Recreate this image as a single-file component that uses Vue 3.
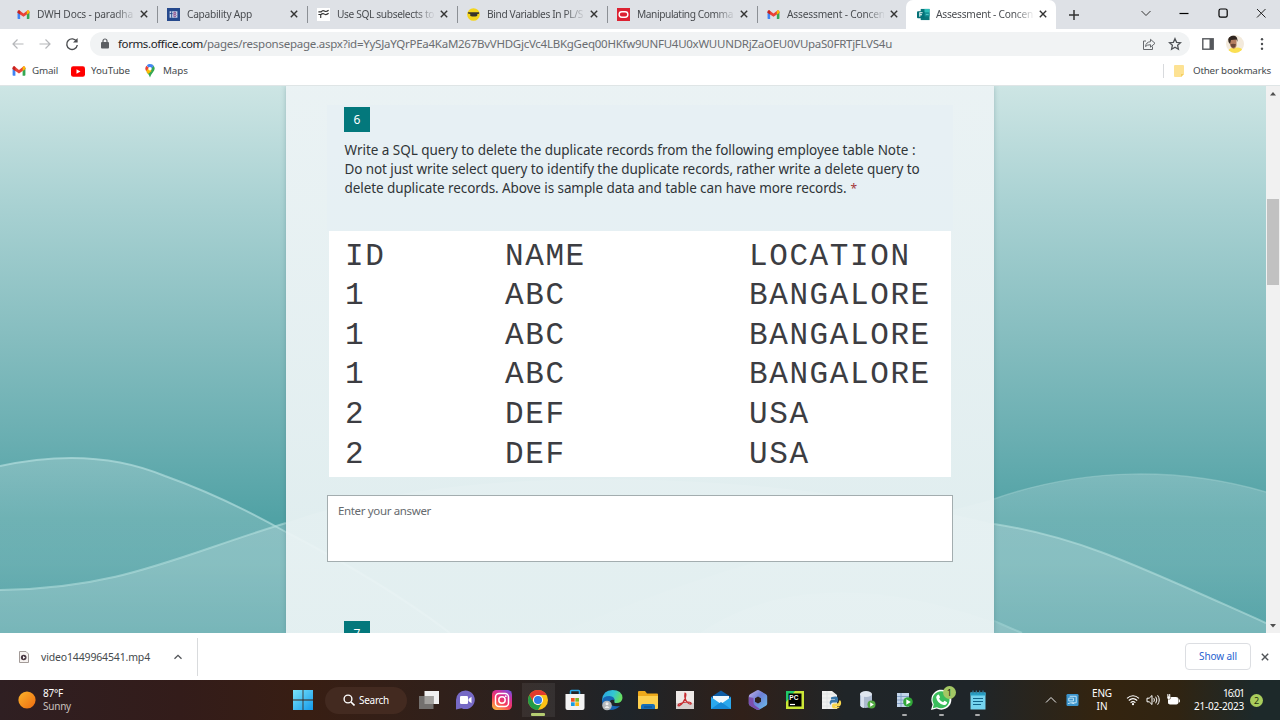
<script setup>
const tabs = [
  { icon: 'gmail', title: 'DWH Docs - paradha', w: 96 },
  { icon: 'cap', title: 'Capability App', w: 65 },
  { icon: 'sql', title: 'Use SQL subselects to', w: 97 },
  { icon: 'bind', title: 'Bind Variables In PL/S', w: 96 },
  { icon: 'oracle', title: 'Manipulating Comma', w: 96 },
  { icon: 'gmail', title: 'Assessment - Concen', w: 98 },
  { icon: 'forms', title: 'Assessment - Concen', w: 97, active: true },
]
const rows = [
  ['ID', 'NAME', 'LOCATION'],
  ['1', 'ABC', 'BANGALORE'],
  ['1', 'ABC', 'BANGALORE'],
  ['1', 'ABC', 'BANGALORE'],
  ['2', 'DEF', 'USA'],
  ['2', 'DEF', 'USA'],
]
const question = [
  { t: 'Write a SQL query to delete the duplicate records from the following employee table Note :', w: 571 },
  { t: 'Do not just write select query to identify the duplicate records, rather write a delete query to', w: 575 },
  { t: 'delete duplicate records. Above is sample data and table can have more records.', w: 502, req: true },
]

// Spreads the tracking of a label so that it takes the given width.
const vFit = {
  mounted(el, { value }) {
    const n = [...el.textContent].length
    const natural = el.getBoundingClientRect().width
    el.style.letterSpacing = (value - natural) / n + 'px'
  },
}
</script>

<template>
  <div class="screen">
    <svg width="0" height="0" class="defs">
      <defs>
        <symbol id="gmail" viewBox="0 0 14 14">
          <path d="M.6 4v7.100q0 .7.700.7h2.100V6z" fill="#4285f4" />
          <path d="M13.400 4v7.100q0 .7-.7.7h-2.100V6z" fill="#34a853" />
          <path d="M.6 4.200q0-2 1.800-1.900L7 5.900l4.600-3.600q1.800-.1 1.800 1.900v.8L7 9.500.6 5z" fill="#ea4335" />
          <path d="M10.600 3.100l1-.8q1.800-.1 1.800 1.900v.8l-2.800 2z" fill="#fbbc04" />
          <path d="M3.400 3.100l-1-.8Q.6 2.200.6 4.200V5l2.800 2z" fill="#c5221f" />
        </symbol>
        <symbol id="cap" viewBox="0 0 14 14">
          <path d="M0 0h14v14H0z" fill="#26498d" /><path d="M2.800 3.500h8.400v7H2.800z" fill="#c9d5ea" />
          <path d="M5 3.500v7M2.800 6H6" stroke="#26498d" /><path d="M7.500 4.500H9q1 1.200 0 2.300 1.500 1.200 0 2.700H7.500zM7.500 6.800H9" fill="none" stroke="#8c4a86" />
        </symbol>
        <symbol id="sql" viewBox="0 0 14 14">
          <path d="M0 0h14v14H0z" fill="#fff" />
          <path d="M1.500 4.200h3q1.500-2.200 3.500-.9t4.500-.9M1.500 7h2.500v3.800M4 7.300q2-2 4-.7t4.500-.9" fill="none" stroke="#333" stroke-width="1.200" />
        </symbol>
        <symbol id="bind" viewBox="0 0 14 14">
          <circle cx="7" cy="7" r="6.800" fill="#f4d51d" />
          <path d="M1 4.500l4 .2h4l4-.2v1.700l-2 .4v2l-2 .6H5.500L3.500 8.500v-2L1 6z" fill="#37342b" />
        </symbol>
        <symbol id="oracle" viewBox="0 0 14 14">
          <path d="M0 0h14v14H0z" fill="#dc2232" /><rect x="2.300" y="4.100" width="9.400" height="5.800" rx="2.900" fill="none" stroke="#fff" stroke-width="1.500" />
        </symbol>
        <symbol id="forms" viewBox="0 0 14 14">
          <path d="M4 1h9.500v12H4z" fill="#0b777b" /><path d="M8 1h5.500v4H8z" fill="#2ebeb9" /><path d="M8 5h5.500v4H8z" fill="#159297" />
          <path d="M9.500 7h3" stroke="#5cc9c8" /><rect y="3.500" width="8" height="7.500" rx="1" fill="#047177" />
          <path d="M3 9.500V5h3M3 7.200h2.400" stroke="#fff" fill="none" stroke-width="1.100" />
        </symbol>
        <symbol id="close" viewBox="0 0 10 10"><path d="M1.800 1.800l6.400 6.400m0-6.400l-6.400 6.400" stroke="currentColor" stroke-width="1.400" /></symbol>
        <linearGradient id="crest" x1="0" y1="374" x2="0" y2="548" gradientUnits="userSpaceOnUse">
          <stop stop-color="#fff" stop-opacity=".2" /><stop offset=".6" stop-color="#fff" stop-opacity=".15" /><stop offset="1" stop-color="#fff" stop-opacity=".05" />
        </linearGradient>
      </defs>
    </svg>

    <header class="tabstrip">
      <div v-for="(t, i) in tabs" :key="i" class="tab" :class="{ active: t.active, nosep: i === 5 }">
        <svg class="fav"><use :href="'#' + t.icon" /></svg>
        <span class="ttl"><span v-fit="t.w">{{ t.title }}</span></span>
        <svg class="x"><use href="#close" /></svg>
      </div>
      <svg class="plus" viewBox="0 0 12 12"><path d="M6 1v10M1 6h10" stroke="#333" stroke-width="1.500" /></svg>
      <div class="winbtns">
        <svg viewBox="0 0 12 12"><path d="M1.500 4L6 8.500 10.500 4" fill="none" stroke="#333" /></svg>
        <svg viewBox="0 0 12 12"><path d="M1.500 6.500h9" stroke="#000" stroke-width="1.200" /></svg>
        <svg viewBox="0 0 12 12"><rect x="2" y="2" width="8.200" height="8.200" rx="1.700" fill="none" stroke="#000" stroke-width="1.200" /></svg>
        <svg viewBox="0 0 12 12"><path d="M2 2l8.500 8.500m0-8.500L2 10.500" stroke="#222" /></svg>
      </div>
    </header>

    <div class="toolbar">
      <svg class="nav" viewBox="0 0 14 14"><path d="M12.500 7H2m4.500-4.500L2 7l4.500 4.500" fill="none" stroke="#b5b7ba" stroke-width="1.200" /></svg>
      <svg class="nav" viewBox="0 0 14 14"><path d="M1.500 7H12M7.500 2.500L12 7l-4.500 4.500" fill="none" stroke="#b5b7ba" stroke-width="1.200" /></svg>
      <svg class="nav" viewBox="0 0 14 14"><path d="M11.700 4.600A5.300 5.300 0 1 0 12.300 8" fill="none" stroke="#4b4d50" stroke-width="1.400" /><path d="M12.600 1v4.600H8z" fill="#4b4d50" /></svg>
      <div class="omni">
        <svg class="lock" viewBox="0 0 8 11"><rect y="4" width="8" height="6.500" rx="1" fill="#5b5e62" /><path d="M2 4.500V3a2 2 0 0 1 4 0v1.500" fill="none" stroke="#5b5e62" stroke-width="1.200" /></svg>
        <span class="url"><span v-fit="85" class="host">forms.office.com</span><span v-fit="689">/pages/responsepage.aspx?id=YySJaYQrPEa4KaM267BvVHDGjcVc4LBKgGeq00HKfw9UNFU4U0xWUUNDRjZaOEU0VUpaS0FRTjFLVS4u</span></span>
        <svg class="share" viewBox="0 0 14 14"><path d="M4 4H1.500v8.500h9V9.500M3.500 9.500q.5-4.500 5-4.800V2.300l4.500 4-4.500 3.900V7.700Q5 7.700 3.500 9.500z" fill="none" stroke="#66696d" /></svg>
        <svg class="star" viewBox="0 0 14 14"><path d="M7 1.700l1.600 3.600 3.900.4-2.900 2.600.8 3.900L7 10.200l-3.400 2 .8-3.900L1.500 5.700l3.900-.4z" fill="none" stroke="#505357" stroke-width="1.300" /></svg>
      </div>
      <svg class="side" viewBox="0 0 12 12"><rect x=".8" y=".8" width="10.400" height="10.400" fill="none" stroke="#55585c" stroke-width="1.400" /><path d="M7.500 1H11v10H7.500z" fill="#55585c" /></svg>
      <svg class="avatar" viewBox="0 0 18 18">
        <clipPath id="av"><circle cx="9" cy="9" r="9" /></clipPath>
        <g clip-path="url(#av)"><path d="M0 0h18v18H0z" fill="#f3eadc" /><path d="M2 18q0-4.500 4-5l6-.5q5 .5 6 6z" fill="#fbe052" /><path d="M4 4h6.500v7q-1.500 3.500-3.500 2.500Q4 12 4 9z" fill="#b57e61" /><path d="M2.500 7Q1 1 6.500.5T11.500 7L10.500 4.500 5 5 4 9z" fill="#30251f" /><path d="M4.500 9.300q2.500-1 5.500 0l-1 2.700q-2 1.300-3.500 0z" fill="#6a4638" /></g>
      </svg>
      <svg class="dots" viewBox="0 0 4 14"><g fill="#4b4d50"><circle cx="2" cy="2.200" r="1.200" /><circle cx="2" cy="7" r="1.200" /><circle cx="2" cy="11.800" r="1.200" /></g></svg>
    </div>

    <div class="bookmarks">
      <svg class="bm g"><use href="#gmail" /></svg><span v-fit="26" class="bt">Gmail</span>
      <svg class="bm yt" viewBox="0 0 14 11"><rect width="14" height="10.500" y=".3" rx="2.200" fill="#f00" /><path d="M5.500 3.200v4.600l4-2.300z" fill="#fff" /></svg><span v-fit="39" class="bt">YouTube</span>
      <svg class="bm mp" viewBox="0 0 10 14"><path d="M1.400 1.700A4.600 4.600 0 0 0 1.200 7.200L5 4.500z" fill="#ea4335" /><path d="M5 0a4.600 4.600 0 0 1 3.700 1.800L1.500 8Q4.300 11 5 13.500 5.700 11 8 8.300 11 5 8.700 1.800z" fill="#34a853" /><path d="M1.200 7l2.500-3 3 3-3.700 3z" fill="#fbbc04" /><path d="M1.900 1.200Q5-1.500 8.700 1.800L6.400 4.500 3 3z" fill="#4285f4" /><circle cx="5" cy="4.700" r="1.700" fill="#fff" /></svg><span v-fit="25" class="bt">Maps</span>
      <div class="other"><svg viewBox="0 0 10 12"><path d="M0 1q0-1 1-1h8q1 0 1 1v8l-3 3H1q-1 0-1-1z" fill="#fde293" /><path d="M7 12V9h3" fill="#f5cf60" /></svg><span v-fit="78" class="bt">Other bookmarks</span></div>
    </div>

    <main class="page">
      <svg class="waves" viewBox="0 0 1266 548" preserveAspectRatio="none">
        <path d="M0 381C60 368 115 370 165 391C210 407 245 424 286 447C350 480 400 510 450 548H0z" fill="url(#crest)" />
        <path d="M560 548C740 470 900 440 994 414C1085 382 1180 382 1266 407V548z" fill="url(#crest)" />
        <path d="M0 505C120 504 180 470 286 438C470 370 800 390 994 439C1080 452 1140 482 1266 538V548H0z" fill="#fff" fill-opacity=".2" />
        <path d="M700 548C800 480 930 510 1022 548z" fill="#fff" fill-opacity=".15" />
        <g fill="none" stroke-width="2">
          <path d="M0 381C60 368 115 370 165 391C210 407 245 424 286 447C350 480 400 510 450 548" stroke="#b4dfde" stroke-opacity=".65" />
          <path d="M0 505C120 504 180 470 286 438M994 439C1080 452 1140 482 1266 538" stroke="#b4dfde" stroke-opacity=".6" />
          <path d="M994 414C1085 382 1180 382 1266 407" stroke="#9dcfcf" stroke-opacity=".5" stroke-width="1.500" />
          <path d="M994 536L1022 548" stroke="#a5d5d5" stroke-opacity=".6" />
        </g>
      </svg>
      <section class="sheet">
        <div class="qblock">
          <div class="num">6</div>
          <div class="qtext">
            <div v-for="l in question" :key="l.t" class="ql"><span v-fit="l.w">{{ l.t }}</span><span v-if="l.req" class="req">*</span></div>
          </div>
        </div>
        <div class="data">
          <div v-for="(r, i) in rows" :key="i" class="dr"><span v-for="c in r" :key="c">{{ c }}</span></div>
        </div>
        <div class="answer"><span v-fit="93">Enter your answer</span></div>
        <div class="num next">7</div>
      </section>
      <aside class="scroll">
        <svg viewBox="0 0 14 14"><path d="M4 9h6L7 5.500z" fill="#505050" /></svg>
        <div class="thumb"></div>
        <svg viewBox="0 0 14 14"><path d="M4 5.500h6L7 9z" fill="#505050" /></svg>
      </aside>
    </main>

    <div class="downloads">
      <div class="dl">
        <svg class="file" viewBox="0 0 10 12"><path d="M.5.500h6.500l2.500 2.500v8.500h-9z" fill="#f7f3f1" stroke="#a39b98" /><circle cx="4.700" cy="6.500" r="2.800" fill="#4b3943" /><path d="M4 5v3l2.300-1.500z" fill="#fff" /></svg>
        <span v-fit="109" class="fname">video1449964541.mp4</span>
        <svg class="chev" viewBox="0 0 10 10"><path d="M1.500 6.800L5 3.300l3.500 3.500" fill="none" stroke="#505357" stroke-width="1.300" /></svg>
      </div>
      <div class="dright"><button class="showall"><span v-fit="38">Show all</span></button><svg class="x big"><use href="#close" /></svg></div>
    </div>

    <footer class="taskbar">
      <div class="weather">
        <svg viewBox="0 0 18 18"><defs><linearGradient id="sun" x2="1" y2="1"><stop stop-color="#fbb42b" /><stop offset="1" stop-color="#ee6b10" /></linearGradient></defs><circle cx="9" cy="9" r="8.600" fill="url(#sun)" /></svg>
        <div><div><span v-fit="20">87°F</span></div><div class="dim"><span v-fit="28">Sunny</span></div></div>
      </div>
      <svg class="start" viewBox="0 0 20 20"><defs><linearGradient id="win" x2="1" y2="1"><stop stop-color="#7be4fb" /><stop offset="1" stop-color="#1399ea" /></linearGradient></defs><path d="M0 0h9.600v9.600H0zM10.400 0H20v9.600h-9.600zM0 10.400h9.600V20H0zM10.400 10.400H20V20h-9.600z" fill="url(#win)" /></svg>
      <div class="search"><svg viewBox="0 0 12 12"><circle cx="5" cy="5" r="3.900" fill="none" stroke="#fff" stroke-width="1.400" /><path d="M8 8l3.500 3.500" stroke="#fff" stroke-width="1.600" /></svg><span v-fit="30">Search</span></div>
      <div class="apps">
        <div class="app"><svg viewBox="0 0 22 22"><path d="M6.500 2H21v13H6.500z" fill="#f1f1f1" /><path d="M1 7h14.500v13H1z" fill="#73706e" /><path d="M6.500 7h9v8h-9z" fill="#a3a19e" /></svg></div>
        <div class="app"><svg viewBox="0 0 22 22"><path d="M11.500 1.500a9.300 9.300 0 1 1-4 17.700L2 20.500V11a9.400 9.400 0 0 1 9.500-9.500z" fill="#7669c5" /><rect x="6" y="7" width="8" height="8" rx="1.300" fill="#fff" /><path d="M14.500 10l3-2.200v6.400l-3-2.200z" fill="#fff" /></svg></div>
        <div class="app"><svg viewBox="0 0 22 22"><defs><linearGradient id="ig" x1=".2" y1="1" x2=".8" y2="0"><stop stop-color="#fcb13f" /><stop offset=".4" stop-color="#f73a5c" /><stop offset=".75" stop-color="#cb2fa0" /><stop offset="1" stop-color="#7752dc" /></linearGradient></defs><rect x="1" y="1" width="20" height="20" rx="4.500" fill="url(#ig)" /><g fill="none" stroke="#fff" stroke-width="1.500"><rect x="4.500" y="4.500" width="13" height="13" rx="3.500" /><circle cx="11" cy="11" r="3.200" /></g><circle cx="14.800" cy="7.200" r=".9" fill="#fff" /></svg></div>
        <div class="app on"><svg viewBox="0 0 22 22"><circle cx="11" cy="11" r="10" fill="#fbc116" /><path d="M2.340 6A10 10 0 0 1 19.660 6H11a5 5 0 0 0-4.330 7.500z" fill="#e33b2e" /><path d="M2.340 6A10 10 0 0 0 11 21l4.330-7.500A5 5 0 0 1 6.670 13.500z" fill="#229b48" /><circle cx="11" cy="11" r="5" fill="#fff" /><circle cx="11" cy="11" r="4" fill="#327de9" /></svg></div>
        <div class="app"><svg viewBox="0 0 22 22"><path d="M6.500 6V2.500q0-1 1-1h7q1 0 1 1V6" fill="none" stroke="#27a7e7" stroke-width="1.500" /><path d="M1.500 5h19v14q0 2-2 2h-15q-2 0-2-2z" fill="#f3f3f3" /><path d="M7 9h3.700v3.700H7z" fill="#ef5124" /><path d="M11.300 9H15v3.700h-3.700z" fill="#7db928" /><path d="M7 13.300h3.700V17H7z" fill="#169de3" /><path d="M11.300 13.300H15V17h-3.700z" fill="#f9b813" /></svg></div>
        <div class="app"><svg viewBox="0 0 22 22"><defs><linearGradient id="ed" x2="1" y2=".3"><stop stop-color="#299fe3" /><stop offset=".6" stop-color="#33c7d2" /><stop offset="1" stop-color="#65de62" /></linearGradient></defs><path d="M1 11Q2 1 11.500 1 21 1 21.500 9q-.5 5-6 5-3 0-2-2 0-4-5-4Q3 8 1 13z" fill="url(#ed)" /><path d="M1 12Q2 7 8.500 7q5 .5 5 4-5-1-4.500 3 1 4 10 3-4 4-9.500 4Q1 20 1 12z" fill="#1766b5" /><circle cx="6" cy="16.500" r="4.800" fill="#b5b9bc" /><circle cx="6" cy="14.700" r="1.500" fill="#eee" /><path d="M3.500 19q2.500-4 5 0z" fill="#eee" /></svg></div>
        <div class="app"><svg viewBox="0 0 22 22"><path d="M1 3q0-1 1-1h6l2 2.500h10q1 0 1 1V19H1z" fill="#eda91b" /><path d="M1 7h20v12q0 1-1 1H2q-1 0-1-1z" fill="#fdd04f" /><path d="M4 20v-3q0-2 2-2h10q2 0 2 2v3z" fill="#176eb9" /><path d="M7 18h8" stroke="#0c4c88" /></svg></div>
        <div class="app"><svg viewBox="0 0 22 22"><path d="M2 2h18v18H2z" fill="#eee9e7" /><path d="M2 14h18v6H2z" fill="#d6d0ce" /><path d="M11 4q1.500 0 .5 4Q10 14 5 17q-2 0 0-2 4-2 9-2 4 .5 3 2-2 .5-4-2-3-4-2-9z" fill="none" stroke="#c62e32" stroke-width="1.200" /></svg></div>
        <div class="app"><svg viewBox="0 0 22 22"><path d="M1 8L11 1.500 21 8v12H1z" fill="#0d5ca5" /><path d="M3 7h16v7H3z" fill="#f0f8fd" /><path d="M1 8l10 7 10-7v12H1z" fill="#2ba8ed" /><path d="M1 20l10-7 10 7z" fill="#1689d7" /></svg></div>
        <div class="app"><svg viewBox="0 0 22 22"><defs><linearGradient id="ms" x2="1" y2="1"><stop stop-color="#c9b2ea" /><stop offset=".45" stop-color="#6c7fd6" /><stop offset="1" stop-color="#6cc3ed" /></linearGradient></defs><path fill-rule="evenodd" d="M10 1.200q1-.4 2 0l7 4q1.200.8 1.200 2v7.600q0 1.200-1.200 2l-7 4q-1 .5-2 0l-7-4q-1.200-.8-1.200-2V7.200q0-1.200 1.200-2zM11 7.500L8 9.300v3.500l3 1.800 3-1.800V9.300z" fill="url(#ms)" /><path d="M1.800 8v6.800q0 1.200 1.200 2l7 4q1.500.5 3-.8l-5-3.500q-1.500-1-1.500-3V9z" fill="#7b4fae" /></svg></div>
        <div class="app"><svg viewBox="0 0 22 22"><path d="M2 2h18v18H2z" fill="#cbe637" /><path d="M2 2h9L2 13z" fill="#21c96b" /><path d="M4.500 4.500h13v13h-13z" fill="#000" /><text x="5.300" y="11.200" class="pc">PC</text><path d="M6 15.500h5" stroke="#fff" stroke-width="1.200" /></svg></div>
        <div class="app"><svg viewBox="0 0 22 22"><path d="M2 2h10l5 4v14H2z" fill="#f0f0ef" /><path d="M2 5h13M2 9h14M2 13h14M2 17h14M7 2v18" stroke="#dcdfe1" stroke-width=".8" /><path d="M15 7.500q3-.5 3 2v2.500q0 1.500-2 1.500h-3q-2 0-2 2H10q-1-3 1-4.500H15v-.5h-4V9q0-1.500 4-1.500z" fill="#3976a8" /><path d="M15 19.500q-3 .5-3-2V16q0-1.500 2-1.500h3q2 0 2-3h1.500q1.500 3-.5 5.500H15v.5h4.500q.5 2-4.500 2z" fill="#f6d54c" /></svg></div>
        <div class="app"><svg viewBox="0 0 22 22"><path d="M3 5v12q5 4 12 0V5z" fill="#adbbd0" /><path d="M4 6v12l3 1V6z" fill="#d8e1ee" /><ellipse cx="9" cy="5" rx="6" ry="3" fill="#dfe6ef" /><circle cx="14.500" cy="15.500" r="4" fill="#51a940" /><path d="M13.200 13.200v4.600l3.600-2.300z" fill="#fff" /></svg></div>
        <div class="app run"><svg viewBox="0 0 22 22"><path d="M3 4h12v14H3z" fill="#c3d5ea" /><path d="M3 7.500h12M3 11h12M3 14.500h12M7 4v14" stroke="#7f9dc4" stroke-width=".9" /><circle cx="14" cy="13" r="4.800" fill="#31a738" /><path d="M12.300 10.200v5.600l4.500-2.800z" fill="#fff" /></svg></div>
        <div class="app run"><svg viewBox="0 0 22 22"><path d="M1 21l1.600-5.500A10 10 0 1 1 6.700 19.500z" fill="#fff" /><path d="M2.800 19.200l1-4A8.500 8.500 0 1 1 7 18.200z" fill="#3bbd5c" /><path d="M7.500 6q1-1 1.800.5l.8 1.800-1 1.500q1.200 2.500 4 3.500l1.400-1.500 2.700 1.500q-.5 3-3.500 2.800-6.500-1.500-7.500-7.500.2-2 1.300-2.600z" fill="#fff" /></svg><span class="badge">1</span></div>
        <div class="app run"><svg viewBox="0 0 22 22"><path d="M3.500 3.500h15v17h-15z" fill="#74d3ef" /><path d="M3.500 3.500h15v3h-15z" fill="#279ec4" /><path d="M6 1.500v3M9.300 1.500v3M12.600 1.500v3M16 1.500v3" stroke="#2f7fa0" stroke-width="1.200" /><path d="M6 9.500h10M6 12.500h10M6 15.500h8" stroke="#12648a" stroke-width="1.200" /></svg></div>
      </div>
      <div class="tray">
        <svg class="up" viewBox="0 0 12 12"><path d="M1 8.500l5-5 5 5" fill="none" stroke="#eee" /></svg>
        <svg class="blue" viewBox="0 0 14 14"><rect x=".5" y=".5" width="13" height="13" rx="1.500" fill="#3b94cc" /><path d="M4 3h7v7H6M3 5h5v3H3zM2 11q3-2 7 0" fill="none" stroke="#c8e8fa" /></svg>
        <div class="lang"><div><span v-fit="20">ENG</span></div><div><span v-fit="11">IN</span></div></div>
        <svg class="st" viewBox="0 0 14 14"><g fill="none" stroke="#fff" stroke-width="1.100"><path d="M1 5.300q6-5.200 12 0M2.800 7.500q4.200-3.800 8.400 0M4.600 9.600q2.400-2 4.800 0" /></g><circle cx="7" cy="11.200" r="1.100" fill="#fff" /></svg>
        <svg class="st" viewBox="0 0 14 14"><path d="M1 5.200h2.200L6 2.500v9L3.200 8.800H1zM7.800 5.200q1.200 1.800 0 3.600M9.700 3.700q2.300 3.300 0 6.600M11.600 2.300q3.300 4.700 0 9.400" fill="none" stroke="#fff" /></svg>
        <svg class="st" viewBox="0 0 14 14"><rect x="2.500" y="4.500" width="9.500" height="6.500" rx="1.500" fill="#fff" stroke="#fff" /><path d="M13.400 6.500v2.800" stroke="#fff" /><path d="M1 2.800v2q0 1.700 1.800 1.700T4.600 4.800v-2z" fill="#fff" stroke="#35240f" stroke-width=".5" /><path d="M1.900 1v2M3.700 1v2M2.800 6.500v4" fill="none" stroke="#fff" /></svg>
        <div class="clock"><div><span v-fit="21">16:01</span></div><div><span v-fit="50">21-02-2023</span></div></div>
        <span class="notif">2</span>
      </div>
    </footer>
  </div>
</template>

<style>
html, body { margin: 0; overflow: hidden; }
</style>
<style scoped>
* { box-sizing: border-box; }
.screen { width: 1280px; height: 720px; display: flex; flex-direction: column; overflow: hidden; font: 11px/14px "Noto Sans", "Open Sans", sans-serif; color: #45494d; background: #fff; white-space: nowrap; }
svg { display: block; flex: none; }
.defs { position: absolute; }
.tabstrip { height: 29px; flex: none; background: #dee1e6; display: flex; align-items: center; padding-left: 7px; }
.tab { width: 150px; height: 29px; display: flex; align-items: center; padding: 0 0 1px 10px; position: relative; flex: none; font-size: 10.200px; color: #4a4d51; border-right: 1px solid #dee1e6; }
.tab:not(.active):not(.nosep)::after { content: ""; position: absolute; right: -2px; top: 6px; height: 17px; width: 1px; background: #8c9095; }
.tab.active { background: #fff; border-radius: 7px 7px 0 0; border: 0; margin-left: -1px; padding-left: 11px; }
.fav { width: 13px; height: 13px; }
.ttl { width: 97px; margin-left: 7px; overflow: hidden; mask-image: linear-gradient(90deg, #000 80%, transparent 102%); }
.tab.active .ttl { margin-left: 6px; }
.ttl span, .ql span, .url span, .bt, .fname { display: inline-block; }
.x { width: 10px; height: 10px; margin-left: 5px; color: #333; }
.plus { width: 12px; height: 12px; margin-left: 12px; }
.winbtns { margin-left: auto; padding-right: 13px; display: flex; gap: 26.300px; margin-top: -3px; }
.winbtns svg { width: 12px; height: 12px; }
.toolbar { height: 29px; flex: none; display: flex; align-items: center; padding-left: 11px; }
.nav { width: 14px; height: 14px; margin-right: 13px; }
.nav:nth-child(3) { margin-right: 0; }
.omni { width: 1100px; margin-left: 11px; height: 24px; border-radius: 12px; background: #f1f3f4; display: flex; align-items: center; padding-left: 11px; }
.lock { width: 8px; height: 11px; }
.url { margin-left: 9px; font-size: 11.500px; color: #6a6d71; display: flex; }
.host { color: #202124; }
.share { width: 14px; height: 14px; margin-left: auto; }
.star { width: 14px; height: 14px; margin: 0 8px 0 12px; }
.side { width: 12px; height: 12px; margin-left: 12px; }
.avatar { width: 18px; height: 18px; margin-left: 12px; }
.dots { width: 4px; height: 14px; margin-left: 16px; }
.bookmarks { height: 28px; flex: none; display: flex; align-items: center; padding: 0 9px 1px 12px; border-bottom: 1px solid #dfe5e6; font-size: 9.800px; }
.bm.g { width: 14px; height: 14px; margin-right: 6px; }
.yt { width: 14px; height: 11px; margin: 0 6px 0 13px; }
.mp { width: 10px; height: 14px; margin: 0 8px 0 15px; }
.other { margin-left: auto; height: 14px; border-left: 1px solid #d8dadd; padding-left: 10px; display: flex; align-items: center; gap: 9px; }
.other svg { width: 10px; height: 12px; }
.page { height: 547px; flex: none; position: relative; overflow: hidden; display: flex; justify-content: space-between; padding-left: 286px; background: linear-gradient(#cde5e4 0, #a8d1d2 22%, #87bec0 45%, #69aeb1 65%, #51a2a5 79%, #4d9fa3 100%); }
.waves { position: absolute; left: 0; top: -1px; width: 1266px; height: 548px; }
.sheet { position: relative; width: 708px; height: 547px; background: linear-gradient(rgba(236,243,245,.94), rgba(238,245,246,.91)); box-shadow: 0 0 5px rgba(50,100,105,.3); padding: 19px 41px 0; }
.qblock { height: 126px; background: rgba(230,240,243,.7); padding: 2px 0 0 17px; }
.num { width: 26px; height: 25px; background: #03787c; color: #fff; font-size: 12px; line-height: 25px; text-align: center; }
.qtext { margin-top: 9px; font-size: 13.500px; line-height: 18.800px; color: #303538; }
.ql { height: 18.800px; padding-left: .5px; }
.req { color: #a4373a; margin-left: 4px; font-size: 12px; }
.data { width: 622px; height: 246px; margin-left: 2px; background: #fff; padding: 5.500px 0 0 16px; font: 31px/39.650px "Liberation Mono", monospace; letter-spacing: 1.600px; color: #3c3d42; }
.dr { height: 39.650px; display: grid; grid-template-columns: 160px 244px 1fr; }
.answer { height: 67px; margin-top: 18px; background: #fff; border: 1px solid #a3adaf; padding: 8px 10px; font-size: 11.500px; color: #666a6e; }
.num.next { margin: 59px 0 0 17px; }
.scroll { width: 14px; height: 547px; background: #f1f1f1; display: flex; flex-direction: column; }
.scroll svg { width: 14px; height: 15px; }
.thumb { height: 86px; margin: 98px 1px auto 1px; background: #c1c1c1; }
.downloads { height: 47px; flex: none; display: flex; justify-content: space-between; background: #fff; align-items: center; }
.dl { width: 198px; height: 38px; border-right: 1px solid #d9dbdd; display: flex; align-items: center; padding-left: 19px; }
.file { width: 10px; height: 12px; }
.fname { margin-left: 12px; font-size: 10.500px; }
.chev { width: 10px; height: 10px; margin-left: 23px; }
.dright { display: flex; align-items: center; padding-right: 10px; }
.showall { width: 66px; height: 27px; border: 1px solid #dcdee2; border-radius: 4px; background: #fff; color: #2962d0; font: 10px "Noto Sans", sans-serif; padding: 0 0 1px; margin-right: 4px; }
.big { color: #505357; }
.taskbar { height: 40px; flex: none; display: flex; align-items: center; color: #fff; font-size: 10px; background: linear-gradient(90deg, #2f1f22 0, #331c1a 14%, #381e13 24%, #2c211e 40%, #1e2429 49%, #302019 58%, #202528 66%, #1f2529 76%, #34240f 86%, #302412 92%, #1d292a 98%); }
.weather { width: 293px; display: flex; align-items: center; padding-left: 18px; line-height: 13px; }
.weather svg { width: 18px; height: 18px; margin-right: 7px; }
.dim { color: #c9c1be; }
.start { width: 20px; height: 20px; }
.search { width: 82px; height: 27px; margin-left: 12px; border-radius: 14px; background: #432a20; display: flex; align-items: center; gap: 4px; padding-left: 18px; }
.search svg { width: 12px; height: 12px; }
.apps { display: flex; margin-left: 3.300px; }
.app { width: 36.620px; height: 40px; display: flex; align-items: center; justify-content: center; position: relative; }
.app > svg { width: 22px; height: 22px; }
.app.on { background: linear-gradient(#fff1, #fff1) center / 33px 34px no-repeat; }
.app.on::after, .app.run::after { content: ""; position: absolute; bottom: 4px; width: 5px; height: 2px; border-radius: 1px; background: #a9aaab; }
.app.on::after { bottom: 4px; width: 14px; height: 3px; background: #b5cc72; }
.badge { position: absolute; left: 20px; top: 6px; width: 13px; height: 13px; border-radius: 50%; background: #a3c764; color: #1d2712; font-size: 9px; line-height: 13px; text-align: center; }
.pc { font: bold 6.500px "Liberation Sans", sans-serif; fill: #fff; }
.tray { margin-left: auto; display: flex; align-items: center; padding-right: 17px; line-height: 13px; }
.up { width: 12px; height: 12px; }
.blue { width: 13px; height: 14px; margin-left: 9px; }
.lang { width: 22px; margin: 0 13px 0 12px; text-align: center; }
.st { width: 14px; height: 14px; margin-right: 6px; }
.clock { width: 52px; margin-left: 6px; text-align: right; }
.notif { width: 13px; height: 13px; border-radius: 50%; background: #a9cd5c; color: #263010; font-size: 9px; line-height: 13px; text-align: center; margin-left: 6px; }
</style>
